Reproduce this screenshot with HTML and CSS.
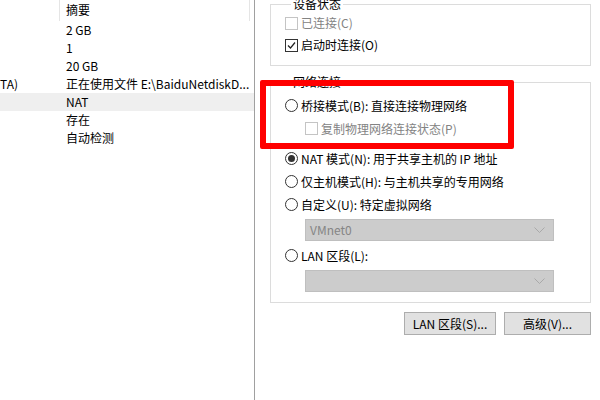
FILE: index.html
```html
<!DOCTYPE html>
<html lang="zh-CN">
<head>
<meta charset="utf-8">
<link rel="stylesheet" href="styles.css">
</head>
<body>
<div class="window">
  <div class="list">
    <div class="row head"><div class="c1"></div><div class="c2">摘要</div></div>
    <div class="row"><div class="c1"></div><div class="c2">2 GB</div></div>
    <div class="row"><div class="c1"></div><div class="c2">1</div></div>
    <div class="row"><div class="c1"></div><div class="c2">20 GB</div></div>
    <div class="row"><div class="c1">TA)</div><div class="c2">正在使用文件 E:\BaiduNetdiskD...</div></div>
    <div class="row sel"><div class="c1"></div><div class="c2">NAT</div></div>
    <div class="row"><div class="c1"></div><div class="c2">存在</div></div>
    <div class="row"><div class="c1"></div><div class="c2">自动检测</div></div>
  </div>
  <div class="panel">
    <fieldset class="group g1">
      <legend>设备状态</legend>
      <div class="opt disabled"><span class="box"></span><span>已连接(C)</span></div>
      <div class="opt"><span class="box checked"><svg width="11" height="11" viewBox="0 0 11 11"><polyline points="2,5.5 4.5,8 9,2.5" fill="none" stroke="#222" stroke-width="1.2"/></svg></span><span>启动时连接(O)</span></div>
    </fieldset>
    <fieldset class="group g2">
      <legend>网络连接</legend>
      <div class="opt tall first"><span class="radio"></span><span>桥接模式(B): 直接连接物理网络</span></div>
      <div class="opt tall disabled indent"><span class="box"></span><span>复制物理网络连接状态(P)</span></div>
      <div class="opt tall gap"><span class="radio on"></span><span>NAT 模式(N): 用于共享主机的 IP 地址</span></div>
      <div class="opt tall"><span class="radio"></span><span>仅主机模式(H): 与主机共享的专用网络</span></div>
      <div class="opt tall"><span class="radio"></span><span>自定义(U): 特定虚拟网络</span></div>
      <div class="select"><span>VMnet0</span><svg width="11" height="7" viewBox="0 0 11 7"><polyline points="0.5,0.5 5.5,5.5 10.5,0.5" fill="none" stroke="#a9a9a9" stroke-width="1"/></svg></div>
      <div class="opt tall"><span class="radio"></span><span>LAN 区段(L):</span></div>
      <div class="select"><span></span><svg width="11" height="7" viewBox="0 0 11 7"><polyline points="0.5,0.5 5.5,5.5 10.5,0.5" fill="none" stroke="#a9a9a9" stroke-width="1"/></svg></div>
    </fieldset>
    <div class="buttons">
      <button class="btn b1">LAN 区段(S)...</button>
      <button class="btn b2">高级(V)...</button>
    </div>
  </div>
  <div class="highlight"></div>
</div>
</body>
</html>
```

FILE: styles.css
```css
* { box-sizing: border-box; }
html, body { margin: 0; padding: 0; background: #fff; }
body {
  font-family: "Noto Sans CJK SC", "Microsoft YaHei", "Noto Sans", sans-serif;
  font-size: 12px;
  color: #000;
  width: 600px;
  height: 400px;
  overflow: hidden;
}
.window {
  position: relative;
  display: flex;
  width: 600px;
  height: 400px;
}
.list {
  width: 255px;
  flex: none;
  border-right: 1px solid #a0a0a0;
  height: 400px;
}
.row {
  display: flex;
  height: 18px;
  line-height: 18px;
  white-space: nowrap;
}
.row.head { height: 21px; line-height: 20px; }
.row.sel { background: #efefef; }
.c1 { width: 60px; flex: none; overflow: hidden; }
.c2 { width: 190px; flex: none; padding-left: 6px; overflow: hidden; }
.row.head .c1 { border-right: 1px solid #e5e5e5; }
.row.head .c2 { border-right: 1px solid #e5e5e5; }

.panel {
  flex: 1;
  padding-left: 15px;
  padding-right: 9px;
}
.group {
  border: 1px solid #dcdcdc;
  margin: 0;
  padding: 0 0 0 14px;
  min-width: 0;
}
.group legend {
  padding: 0 2px;
  margin-left: 6px;
  line-height: 16px;
  height: 16px;
}
.g1 { margin-top: -4px; padding-bottom: 9px; }
.g2 { margin-top: 8px; padding-bottom: 10px; }

.opt {
  display: flex;
  align-items: center;
  height: 22px;
  line-height: 22px;
  white-space: nowrap;
}
.opt.tall { height: 23px; line-height: 23px; }
.opt.first { margin-top: 4px; }
.opt.gap { margin-top: 7px; }
.opt.indent { padding-left: 20px; }
.opt.disabled { color: #838383; }

.box {
  width: 13px;
  height: 13px;
  border: 1px solid #333;
  background: #fff;
  margin-right: 3px;
  display: flex;
  align-items: center;
  justify-content: center;
  flex: none;
}
.opt.disabled .box { border-color: #c4c4c4; }
.radio {
  width: 13px;
  height: 13px;
  border: 1px solid #333;
  border-radius: 50%;
  background: #fff;
  margin-right: 3px;
  flex: none;
  display: flex;
  align-items: center;
  justify-content: center;
}
.radio.on::after {
  content: "";
  width: 7px;
  height: 7px;
  border-radius: 50%;
  background: #333;
}

.select {
  margin: 3px 0 0 20px;
  width: 249px;
  height: 22px;
  background: #cccccc;
  border: 1px solid #bfbfbf;
  display: flex;
  align-items: center;
  justify-content: space-between;
  padding: 0 8px 0 4px;
  color: #858585;
  line-height: 20px;
}
.select + .opt { margin-top: 3px; }

.buttons {
  display: flex;
  justify-content: flex-end;
  gap: 8px;
  margin-top: 9px;
}
.btn {
  font: inherit;
  color: #000;
  height: 23px;
  background: #e1e1e1;
  border: 1px solid #adadad;
  padding: 0;
  line-height: 20px;
}
.b1 { width: 92px; }
.b2 { width: 87px; }

.highlight {
  position: absolute;
  left: 260px;
  top: 80px;
  width: 254px;
  height: 69px;
  border: 6px solid #ff0000;
  border-radius: 2px;
}
```
